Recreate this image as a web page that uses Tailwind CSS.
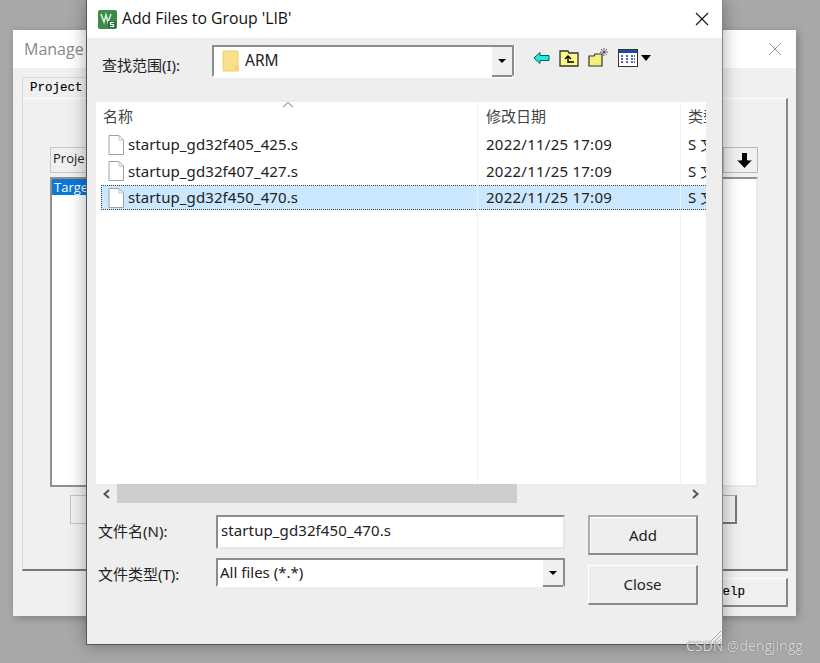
<!DOCTYPE html>
<html><head><meta charset="utf-8">
<script src="https://cdn.jsdelivr.net/npm/@tailwindcss/browser@4"></script>
</head>
<body class="m-0">
<div class="relative w-[820px] h-[663px] overflow-hidden bg-[#a8a8a8] font-['Noto_Sans','Noto_Sans_CJK_SC',sans-serif] text-[#222]">

  <!-- back window -->
  <div class="absolute left-[13px] top-[30px] w-[783px] h-[586px] bg-[#f0f0f0] shadow-[2px_2px_8px_rgba(0,0,0,0.25)] flex flex-col">
    <div class="h-[38px] shrink-0 bg-white flex items-center justify-between pl-[11px] pr-[14px]">
      <span class="text-[#8a8a8a] text-[16px] font-['Open_Sans',sans-serif]">Manage</span>
      <svg width="14" height="14" viewBox="0 0 14 14"><path d="M1 1L13 13M13 1L1 13" fill="none" stroke="#999" stroke-width="1"/></svg>
    </div>
    <div class="relative flex-1">
      <div class="absolute left-[9px] top-[9px] w-[76px] h-[22px] border-l border-t border-[#d8d8d8] bg-[#f0f0f0] pl-[7px] pt-[1px] font-['Liberation_Mono',monospace] text-[12.5px] text-black [-webkit-text-stroke:0.15px_#000]">Project</div>
      <div class="absolute left-[9px] top-[30px] w-[766px] h-[473px] border border-white border-r-[2px] border-r-[#888] border-b-[2px] border-b-[#777] border-l-[#d8d8d8]">
        <div class="absolute left-[27px] top-[48px] w-[60px] h-[26px] border border-[#c8c8c8] bg-[#f0f0f0] pl-[2px] pt-[1px] text-[13px] font-['Open_Sans',sans-serif]">Proje</div>
        <div class="absolute left-[27px] top-[78px] w-[60px] h-[310px] border-2 border-[#909090] border-r-0 bg-white">
          <div class="bg-[#0a78d7] text-white w-[40px] h-[16px] text-[13px] leading-[16px] font-['Open_Sans',sans-serif] pl-[2px]">Targe</div>
        </div>
        <div class="absolute left-[47px] top-[396px] w-[40px] h-[29px] bg-[#f0f0f0] border border-[#c4c4c4]"></div>
        <div class="absolute left-[700px] top-[48px] w-[35px] h-[26px] border border-[#bbb] bg-[#f0f0f0] flex items-center justify-end pr-[4px]">
          <svg width="17" height="17" viewBox="0 0 17 17"><path d="M6 1H11V8Q13 9 16 8L8.5 16L1 8Q4 9 6 8Z" fill="#000"/></svg>
        </div>
        <div class="absolute left-[700px] top-[78px] w-[35px] h-[310px] border-t-2 border-t-[#909090] border-r-2 border-r-[#e8e8e8] bg-white border-b-2 border-b-[#e8e8e8]"></div>
        <div class="absolute left-[700px] top-[396px] w-[14px] h-[29px] bg-[#f0f0f0] border-t border-t-[#aaa] border-r-2 border-b-2 border-r-[#777] border-b-[#777]"></div>
      </div>
      <div class="absolute left-[675px] top-[510px] w-[100px] h-[29px] border border-white border-r-2 border-b-2 border-r-[#888] border-b-[#888] pl-[26px] pt-[4px] font-['Liberation_Mono',monospace] text-[12.5px] text-black [-webkit-text-stroke:0.15px_#000]">Help</div>
    </div>
  </div>

  <!-- front window -->
  <div class="absolute left-[86px] top-0 w-[637px] h-[645px] bg-[#eeeeee] border-l border-b border-r border-l-[#555] border-b-[#555] border-r-[#888] shadow-[0_0_16px_rgba(0,0,0,0.35)] flex flex-col">
    <div class="h-[38px] shrink-0 bg-white flex items-center justify-between pl-[11px] pr-[13px]">
      <div class="flex items-center gap-[5px]">
        <svg width="19" height="19" viewBox="0 0 19 19"><rect width="19" height="19" rx="2" fill="#3f8a4d"/><path d="M3 4L6 12L8 5L10 12L13 4" fill="none" stroke="#d8ecd8" stroke-width="1.6"/><rect x="10" y="11" width="8" height="7" fill="#2d6b3a"/><path d="M16 12.5H12.5V14.5H15.5V16.5H12" fill="none" stroke="#fff" stroke-width="1.2"/></svg>
        <span class="text-[15.75px] font-['Open_Sans',sans-serif] text-[#111]">Add Files to Group 'LIB'</span>
      </div>
      <svg width="14" height="14" viewBox="0 0 14 14"><path d="M1 1L13 13M13 1L1 13" stroke="#111" stroke-width="1.1" fill="none"/></svg>
    </div>

    <div class="h-[64px] shrink-0 flex items-start pl-[15px] pt-[7px]">
      <span class="w-[110px] mt-[10px] text-[15px] leading-[20px]">查找范围(I):</span>
      <div class="w-[302px] h-[32px] bg-white border-2 border-[#8c8c8c] border-b-white flex items-center pl-[8px] relative shadow-[1px_1px_0_#fff]">
        <svg width="18" height="22" viewBox="0 0 18 22"><path d="M1 1H16V21H1Z" fill="#fbe08c" stroke="#f2cf6c"/><path d="M12 15H17V21H12Z" fill="#f6d67a"/></svg>
        <span class="ml-[5px] text-[15.5px] leading-[20px] -mt-[2px]">ARM</span>
        <div class="absolute right-0 top-0 bottom-[-2px] w-[20px] bg-[#f0f0f0] border-b-2 border-[#8c8c8c] flex items-center justify-center">
          <div class="w-0 h-0 border-l-[4px] border-r-[4px] border-t-[4px] border-l-transparent border-r-transparent border-t-black"></div>
        </div>
      </div>
      <div class="flex items-center ml-[19px] mt-[3px] gap-[9px]">
        <svg width="17" height="14" viewBox="0 0 17 14"><path d="M1 7L7 1.5V4.5H16V9.5H7V12.5Z" fill="#20e8e8" stroke="#064" stroke-width="1"/></svg>
        <svg width="20" height="18" viewBox="0 0 20 18"><path d="M1 17V2H9L10 4H19V17Z" fill="#fbf78a" stroke="#333" stroke-width="1.3"/><path d="M9 14V8M6 10L9 7L12 10M9 13H15" stroke="#000" stroke-width="1.4" fill="none"/></svg>
        <svg width="21" height="19" viewBox="0 0 21 19"><path d="M1 18V8H6L7 6H14V18Z" fill="#f6f07a" stroke="#333" stroke-width="1.2"/><path d="M16 0V8M12 4H20M13 1L19 7M19 1L13 7" stroke="#444" stroke-width="1" stroke-dasharray="1.5 0.7"/></svg>
        <div class="flex items-center gap-[3px]">
          <svg width="20" height="18" viewBox="0 0 20 18"><rect x="0.5" y="0.5" width="19" height="17" fill="#fff" stroke="#333"/><rect x="1" y="1" width="18" height="3" fill="#1a4fa0"/><path d="M3 7H6M8 7H11M13 7H17M3 10H6M8 10H11M13 10H17M3 13H6M8 13H11M13 13H17" stroke="#2230a8" stroke-width="1.6" stroke-dasharray="2 1"/></svg>
          <div class="w-0 h-0 border-l-[5px] border-r-[5px] border-t-[6px] border-l-transparent border-r-transparent border-t-black"></div>
        </div>
      </div>
    </div>

    <div class="relative ml-[9px] w-[610px] h-[382px] shrink-0 bg-white overflow-hidden text-[15px] whitespace-nowrap">
      <div class="absolute left-[381px] top-0 bottom-0 w-px bg-[#eef3fa]"></div>
      <div class="absolute left-[584px] top-0 bottom-0 w-px bg-[#eef3fa]"></div>
      <svg class="absolute left-[186px] top-[-1px]" width="12" height="7" viewBox="0 0 12 7"><path d="M1 6L6 1.5L11 6" fill="none" stroke="#aaa" stroke-width="1.2"/></svg>
      <div class="flex h-[29px] items-center text-[#444]">
        <span class="w-[381px] shrink-0 pl-[7px]">名称</span>
        <span class="w-[203px] shrink-0 pl-[8px] border-l border-[#e5e5e5] h-full flex items-center">修改日期</span>
        <span class="shrink-0 pl-[7px] border-l border-[#e5e5e5] h-full flex items-center">类型</span>
      </div>
      <div class="flex h-[27px] items-center pl-[12px]">
        <svg class="shrink-0" width="16" height="20" viewBox="0 0 16 20"><path d="M1 .5H11L15.5 5V19.5H1Z" fill="#fff" stroke="#a0a0a0"/><path d="M11 .5V5H15.5" fill="none" stroke="#c0c0c0"/></svg>
        <span class="w-[353px] shrink-0 pl-[4px] tracking-[0.1px]">startup_gd32f405_425.s</span><span class="w-[203px] shrink-0 pl-[9px] tracking-[0.25px]">2022/11/25 17:09</span><span class="shrink-0 pl-[8px]">S 文件</span>
      </div>
      <div class="flex h-[26px] items-center pl-[12px]">
        <svg class="shrink-0" width="16" height="20" viewBox="0 0 16 20"><path d="M1 .5H11L15.5 5V19.5H1Z" fill="#fff" stroke="#a0a0a0"/><path d="M11 .5V5H15.5" fill="none" stroke="#c0c0c0"/></svg>
        <span class="w-[353px] shrink-0 pl-[4px] tracking-[0.1px]">startup_gd32f407_427.s</span><span class="w-[203px] shrink-0 pl-[9px] tracking-[0.25px]">2022/11/25 17:09</span><span class="shrink-0 pl-[8px]">S 文件</span>
      </div>
      <div class="flex h-[25px] mt-px items-center ml-[5px] pl-[6px] bg-[#cce8ff] border border-dotted border-[#444] border-r-0">
        <svg class="shrink-0" width="16" height="20" viewBox="0 0 16 20"><path d="M1 .5H11L15.5 5V19.5H1Z" fill="#fff" stroke="#a0a0a0"/><path d="M11 .5V5H15.5" fill="none" stroke="#c0c0c0"/></svg>
        <span class="w-[353px] shrink-0 pl-[4px] tracking-[0.1px]">startup_gd32f450_470.s</span><span class="w-[203px] shrink-0 pl-[9px] tracking-[0.25px]">2022/11/25 17:09</span><span class="shrink-0 pl-[8px]">S 文件</span>
      </div>
    </div>

    <div class="ml-[9px] w-[610px] h-[19px] shrink-0 flex items-center">
      <div class="w-[21px] flex justify-center"><svg width="9" height="10" viewBox="0 0 9 10"><path d="M7 1L2.5 5L7 9" fill="none" stroke="#555" stroke-width="2"/></svg></div>
      <div class="w-[400px] h-[19px] bg-[#cdcdcd]"></div>
      <div class="flex-1 flex justify-end pr-[6px]"><svg width="9" height="10" viewBox="0 0 9 10"><path d="M2 1L6.5 5L2 9" fill="none" stroke="#555" stroke-width="2"/></svg></div>
    </div>

    <div class="flex pl-[11px] pt-[12px] text-[15px]">
      <div class="w-[118px] flex flex-col">
        <span class="h-[42px] leading-[32px]">文件名(N):</span>
        <span class="leading-[34px]">文件类型(T):</span>
      </div>
      <div class="w-[349px] flex flex-col">
        <div class="h-[34px] bg-white border-2 border-[#8c8c8c] border-r-[#e8e8e8] border-b-[#e8e8e8] pl-[3px] leading-[26px] tracking-[0.1px]">startup_gd32f450_470.s</div>
        <div class="mt-[9px] h-[29px] bg-white border-2 border-[#8c8c8c] border-b-white relative pl-[2px] leading-[25px]">All files (*.*)
          <div class="absolute right-0 top-0 w-[20px] h-[27px] bg-[#f0f0f0] border-b-2 border-[#8c8c8c] flex items-center justify-center">
            <div class="w-0 h-0 border-l-[4px] border-r-[4px] border-t-[4px] border-l-transparent border-r-transparent border-t-black"></div>
          </div>
        </div>
      </div>
      <div class="ml-[23px] flex flex-col gap-[10px]">
        <div class="w-[110px] h-[40px] border-2 border-[#8a8a8a] border-t-[#aaa] border-l-[#aaa] shadow-[inset_1px_1px_0_#fff] flex items-center justify-center">Add</div>
        <div class="w-[110px] h-[40px] border border-white border-r-2 border-b-2 border-r-[#8a8a8a] border-b-[#8a8a8a] flex items-center justify-center">Close</div>
      </div>
    </div>
    <svg class="absolute right-0 bottom-0" width="14" height="14" viewBox="0 0 14 14"><path d="M13 1L1 13M13 5L5 13M13 9L9 13" stroke="#aaa" stroke-width="1"/></svg>
  </div>

  <span class="absolute left-[686px] top-[635px] text-[14px] text-[#e8e8e8]/90 font-['Open_Sans',sans-serif] [text-shadow:0_0_1px_#555]">CSDN @dengjingg</span>
</div>
</body></html>
